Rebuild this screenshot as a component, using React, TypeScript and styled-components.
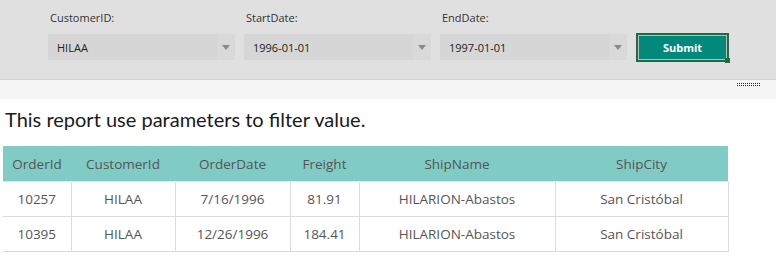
import styled, { createGlobalStyle } from 'styled-components'

const GlobalStyle = createGlobalStyle`
    body {
        margin : 0;
        background : #fff;
        font-family : "Open Sans", "Noto Sans", sans-serif;
    }
`

interface Param {
    label : string
    value : string
}

const params : Param[] = [
    { label : 'CustomerID:', value : 'HILAA' },
    { label : 'StartDate:', value : '1996-01-01' },
    { label : 'EndDate:', value : '1997-01-01' },
]

interface Order {
    id : number
    customer : string
    date : string
    freight : string
    shipName : string
    shipCity : string
}

const orders : Order[] = [
    { id : 10257, customer : 'HILAA', date : '7/16/1996', freight : '81.91', shipName : 'HILARION-Abastos', shipCity : 'San Cristóbal' },
    { id : 10395, customer : 'HILAA', date : '12/26/1996', freight : '184.41', shipName : 'HILARION-Abastos', shipCity : 'San Cristóbal' },
]

const columns = [
    { title : 'OrderId', width : 68 },
    { title : 'CustomerId', width : 104 },
    { title : 'OrderDate', width : 115 },
    { title : 'Freight', width : 69 },
    { title : 'ShipName', width : 196 },
    { title : 'ShipCity', width : 173 },
]

export const App = () => {
    return (
        <Page>
            <GlobalStyle />
            <Toolbar>
                {params.map(p => (
                    <Field key={p.label}>
                        <Label>{p.label}</Label>
                        <Select>
                            <SelectValue>{p.value}</SelectValue>
                            <Arrow />
                        </Select>
                    </Field>
                ))}
                <SubmitButton>Submit</SubmitButton>
            </Toolbar>
            <Splitter>
                <Grip />
            </Splitter>
            <Caption>This report use parameters to filter value.</Caption>
            <Table>
                <colgroup>
                    {columns.map(c => <col key={c.title} style={{ width : c.width }} />)}
                </colgroup>
                <thead>
                    <tr>
                        {columns.map(c => <Th key={c.title}>{c.title}</Th>)}
                    </tr>
                </thead>
                <tbody>
                    {orders.map(o => (
                        <tr key={o.id}>
                            <Td>{o.id}</Td>
                            <Td>{o.customer}</Td>
                            <Td>{o.date}</Td>
                            <Td>{o.freight}</Td>
                            <Td>{o.shipName}</Td>
                            <Td>{o.shipCity}</Td>
                        </tr>
                    ))}
                </tbody>
            </Table>
        </Page>
    )
}

// styled-component
const Page = styled.div`
    width : 778px;
`

const Toolbar = styled.div`
    width : 776px;
    height : 80px;
    box-sizing : border-box;
    background : #e0e0e0;
    border-bottom : 1px solid #d0d0d0;
    display : flex;
    align-items : flex-start;
    gap : 9px;
    padding : 11px 0 0 48px;
`

const Field = styled.div`
    display : flex;
    flex-direction : column;
    width : 187px;
`

const Label = styled.div`
    font-size : 11px;
    color : #333;
    height : 23px;
    line-height : 14px;
    padding-left : 2px;
`

const Select = styled.div`
    height : 26px;
    background : #d6d6d6;
    display : flex;
    align-items : center;
`

const SelectValue = styled.div`
    flex : 1;
    font-size : 11px;
    color : #222;
    padding-left : 9px;
`

const Arrow = styled.div`
    width : 18px;
    height : 26px;
    background : #d9d9d9;
    position : relative;
    &::after {
        content : '';
        position : absolute;
        left : 5px;
        top : 11px;
        border-left : 4px solid transparent;
        border-right : 4px solid transparent;
        border-top : 5px solid #8a8a8a;
    }
`

const SubmitButton = styled.button`
    margin-top : 22px;
    width : 93px;
    height : 29px;
    box-sizing : border-box;
    border : 2px solid #1f6b42;
    outline : 1px solid #bdbdbd;
    outline-offset : -3px;
    background : #00897b;
    color : #fff;
    font-family : "Open Sans", sans-serif;
    font-weight : 700;
    font-size : 11px;
    position : relative;
    padding : 0;
    &::after {
        content : '';
        position : absolute;
        right : -3px;
        bottom : -3px;
        width : 5px;
        height : 5px;
        background : #1f6b42;
    }
`

const Splitter = styled.div`
    width : 776px;
    height : 19px;
    background : #f5f5f5;
    position : relative;
`

const Grip = styled.div`
    position : absolute;
    right : 16px;
    top : 3px;
    width : 23px;
    height : 1px;
    border-top : 1px dotted #222;
    border-bottom : 1px dotted #222;
`

const Caption = styled.div`
    font-family : "Lato", sans-serif;
    font-size : 20px;
    color : #1a1a1a;
    padding : 8px 0 0 5px;
    height : 47px;
    box-sizing : border-box;
`

const Table = styled.table`
    margin-left : 3px;
    border-collapse : collapse;
    table-layout : fixed;
    width : 725px;
    font-family : "Open Sans", sans-serif;
    font-size : 13.5px;
    color : #555;
`

const Th = styled.th`
    background : #80cbc4;
    font-weight : 400;
    height : 35px;
    padding : 0;
    border-bottom : 1px solid #e6e6e6;
`

const Td = styled.td`
    height : 34px;
    padding : 0;
    text-align : center;
    border-bottom : 1px solid #dcdcdc;
    border-right : 1px solid #dcdcdc;
`

export default App
